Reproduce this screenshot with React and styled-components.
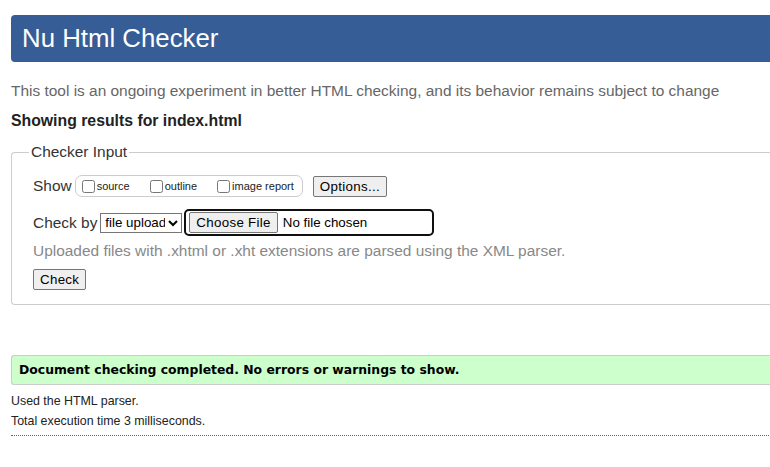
import styled, { createGlobalStyle } from 'styled-components';

const GlobalStyle = createGlobalStyle`
    html, body {
        margin: 0;
        padding: 0;
        background: #fff;
        overflow: hidden;
    }
    body {
        font-family: "Liberation Sans", Arial, sans-serif;
        color: #222;
    }
`;

const App = () => {
    return (
        <Page>
            <GlobalStyle />
            <Header>Nu Html Checker</Header>
            <Intro>
                This tool is an ongoing experiment in better HTML checking, and its behavior remains subject to change
            </Intro>
            <ResultsFor>Showing results for index.html</ResultsFor>

            <InputSet>
                <Legend>Checker Input</Legend>
                <Row $after={12}>
                    <RowLabel>Show</RowLabel>
                    <ShowGroup>
                        <Option><input type="checkbox" />source</Option>
                        <Option><input type="checkbox" />outline</Option>
                        <Option $last><input type="checkbox" />image report</Option>
                    </ShowGroup>
                    <Button>Options...</Button>
                </Row>
                <Row $after={5}>
                    <RowLabel>Check by</RowLabel>
                    <Select defaultValue="file">
                        <option value="file">file upload</option>
                    </Select>
                    <FileBox>
                        <Button type="button">Choose File</Button>
                        <FileName>No file chosen</FileName>
                    </FileBox>
                </Row>
                <Hint>Uploaded files with .xhtml or .xht extensions are parsed using the XML parser.</Hint>
                <Button>Check</Button>
            </InputSet>

            <Success>Document checking completed. No errors or warnings to show.</Success>
            <Detail $top={10}>Used the HTML parser.</Detail>
            <Detail $top={7}>Total execution time 3 milliseconds.</Detail>
            <Rule />
        </Page>
    );
};

export default App;

const Page = styled.div`
    padding: 15px 0 0 11px;
    width: 800px;
`;

const Header = styled.h1`
    margin: 0;
    height: 47px;
    line-height: 47px;
    padding-left: 11px;
    background: #365d95;
    color: #fff;
    font-size: 25.8px;
    font-weight: normal;
    border-radius: 4px 0 0 4px;
`;

const Intro = styled.p`
    margin: 19px 0 0;
    font-size: 15.45px;
    line-height: 20px;
    color: #666;
`;

const ResultsFor = styled.h2`
    margin: 10px 0 0;
    font-size: 15.8px;
    line-height: 20px;
    font-weight: bold;
    color: #222;
`;

const InputSet = styled.fieldset`
    margin: 12px 0 0;
    padding: 14px 0 14px 21px;
    border: 1px solid #ccc;
    border-right: none;
    border-radius: 4px 0 0 4px;
`;

const Legend = styled.legend`
    margin-left: -4px;
    padding: 0 2px;
    font-size: 15.45px;
    color: #333;
`;

const Row = styled.div`
    display: flex;
    align-items: center;
    margin-bottom: ${props => props.$after}px;
    font-size: 15.45px;
    color: #333;
`;

const RowLabel = styled.span`
    margin-right: 3px;
`;

const ShowGroup = styled.span`
    display: flex;
    align-items: center;
    height: 22px;
    padding: 0 8px 0 6px;
    margin-right: 10px;
    border: 1px solid #ccc;
    border-radius: 7px;
    box-sizing: border-box;
`;

const Option = styled.label`
    display: flex;
    align-items: center;
    margin-right: ${props => (props.$last ? 0 : 20)}px;
    font-size: 11px;
    color: #222;

    input {
        margin: 0 2px 0 0;
        width: 13px;
        height: 13px;
    }
`;

const Button = styled.button`
    font-family: "Liberation Sans", Arial, sans-serif;
    font-size: 13.33px;
    height: 21px;
    padding: 1px 6px;
    border: 1px solid #767676;
    border-radius: 2px;
    background: #efefef;
    color: #000;
    letter-spacing: 0.3px;
`;

const Select = styled.select`
    font-family: "Liberation Sans", Arial, sans-serif;
    font-size: 13.33px;
    height: 20px;
    width: 82px;
    margin-right: 2px;
    border: 1px solid #767676;
    border-radius: 0;
    background: #fff;
    color: #000;
`;

const FileBox = styled.span`
    display: flex;
    align-items: center;
    gap: 5px;
    width: 250px;
    height: 27px;
    padding: 0 3px;
    box-sizing: border-box;
    border: 2px solid #101010;
    border-radius: 5px;
`;

const FileName = styled.span`
    font-size: 13.33px;
    color: #000;
`;

const Hint = styled.p`
    margin: 0 0 8px;
    font-size: 15.45px;
    line-height: 20px;
    color: #888;
`;

const Success = styled.div`
    margin-top: 50px;
    height: 28px;
    line-height: 28px;
    padding-left: 7px;
    background: #ccffcc;
    border-top: 1px solid #ccc;
    border-bottom: 1px solid #ccc;
    border-left: 1px solid #ccc;
    border-radius: 3px 0 0 3px;
    font-family: "DejaVu Sans", Verdana, sans-serif;
    font-weight: bold;
    font-size: 12.4px;
    color: #000;
`;

const Detail = styled.p`
    margin: ${props => props.$top}px 0 0;
    font-size: 12.4px;
    line-height: 13px;
    color: #222;
`;

const Rule = styled.hr`
    margin: 7px 0 0;
    border: none;
    border-top: 1px dotted #666;
`;
